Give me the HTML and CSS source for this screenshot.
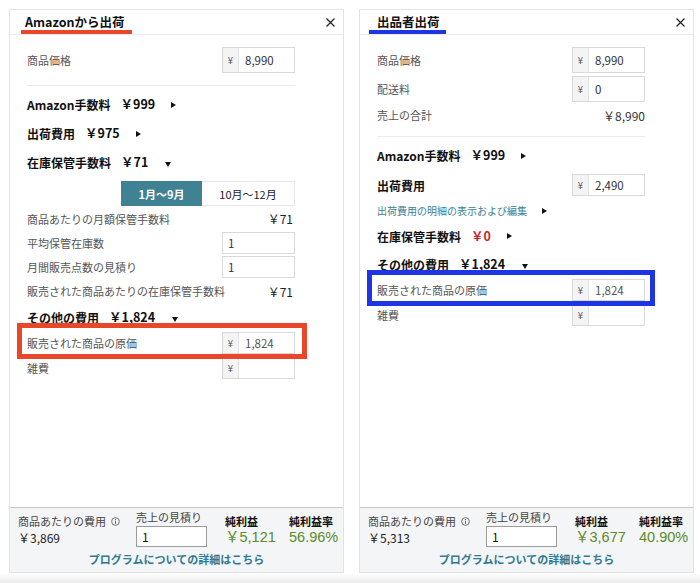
FILE: index.html
```html
<!DOCTYPE html>
<html lang="ja">
<head>
<meta charset="utf-8">
<title>収益シミュレーター</title>
<link rel="stylesheet" href="styles.css">
</head>
<body>
<div class="page">
  <section class="panel">
    <header class="panel-head">
      <h2 class="tab tab-red">Amazonから出荷</h2>
      <svg class="close" viewBox="0 0 9 9"><path d="M0.5 0.5L8.5 8.5M8.5 0.5L0.5 8.5" stroke="#222" stroke-width="1.2"/></svg>
    </header>
    <div class="panel-body">
      <div class="row h26">
        <span class="label">商品価格</span>
        <div class="field lg"><span class="addon">¥</span><span class="val">8,990</span></div>
      </div>
      <div class="divider d-left"></div>
      <div class="fee"><span class="fee-name">Amazon手数料</span><span class="fee-val">￥999</span><i class="tri-r"></i></div>
      <div class="fee"><span class="fee-name">出荷費用</span><span class="fee-val">￥975</span><i class="tri-r"></i></div>
      <div class="fee"><span class="fee-name">在庫保管手数料</span><span class="fee-val">￥71</span><i class="tri-d"></i></div>
      <div class="tabs">
        <span class="seg seg-on">1月〜9月</span>
        <span class="seg seg-off">10月〜12月</span>
      </div>
      <div class="row h25"><span class="label">商品あたりの月額保管手数料</span><span class="amount">￥71</span></div>
      <div class="row h24"><span class="label">平均保管在庫数</span><div class="field"><span class="val">1</span></div></div>
      <div class="row h24"><span class="label">月間販売点数の見積り</span><div class="field"><span class="val">1</span></div></div>
      <div class="row h24"><span class="label">販売された商品あたりの在庫保管手数料</span><span class="amount">￥71</span></div>
      <div class="fee"><span class="fee-name">その他の費用</span><span class="fee-val">￥1,824</span><i class="tri-d"></i></div>
      <div class="row h22 hl hl-red"><span class="label">販売された商品の原価</span><div class="field"><span class="addon">¥</span><span class="val muted">1,824</span></div></div>
      <div class="row h22 mt3"><span class="label">雑費</span><div class="field"><span class="addon">¥</span><span class="val"></span></div></div>
    </div>
    <footer class="panel-foot">
      <div class="foot-grid">
        <div class="fcol">
          <div class="f-label">商品あたりの費用<svg class="info" viewBox="0 0 10 10"><circle cx="5" cy="5" r="4.3" fill="none" stroke="#555" stroke-width="0.9"/><circle cx="5" cy="3" r="0.7" fill="#555"/><path d="M5 4.4V7.6" stroke="#555" stroke-width="1"/></svg></div>
          <div class="f-cost">￥3,869</div>
        </div>
        <div class="fcol fcol-qty">
          <div class="f-label tight">売上の見積り</div>
          <div class="qty">1</div>
        </div>
        <div class="fcol fcol-res">
          <div class="f-head">純利益</div>
          <div class="f-green">￥5,121</div>
        </div>
        <div class="fcol fcol-res">
          <div class="f-head">純利益率</div>
          <div class="f-green">56.96%</div>
        </div>
      </div>
      <div class="f-link">プログラムについての詳細はこちら</div>
    </footer>
  </section>

  <section class="panel">
    <header class="panel-head">
      <h2 class="tab tab-blue">出品者出荷</h2>
      <svg class="close" viewBox="0 0 9 9"><path d="M0.5 0.5L8.5 8.5M8.5 0.5L0.5 8.5" stroke="#222" stroke-width="1.2"/></svg>
    </header>
    <div class="panel-body">
      <div class="row h26">
        <span class="label">商品価格</span>
        <div class="field lg"><span class="addon">¥</span><span class="val">8,990</span></div>
      </div>
      <div class="row h26 mt3">
        <span class="label">配送料</span>
        <div class="field lg"><span class="addon">¥</span><span class="val">0</span></div>
      </div>
      <div class="row h26"><span class="label">売上の合計</span><span class="amount total">￥8,990</span></div>
      <div class="divider d-right"></div>
      <div class="fee"><span class="fee-name">Amazon手数料</span><span class="fee-val">￥999</span><i class="tri-r"></i></div>
      <div class="row h30"><span class="fee-name">出荷費用</span><div class="field"><span class="addon">¥</span><span class="val">2,490</span></div></div>
      <div class="link-row"><span class="small-link">出荷費用の明細の表示および編集</span><i class="tri-r tri-link"></i></div>
      <div class="fee h28 mt1"><span class="fee-name">在庫保管手数料</span><span class="fee-val red">￥0</span><i class="tri-r"></i></div>
      <div class="fee"><span class="fee-name">その他の費用</span><span class="fee-val">￥1,824</span><i class="tri-d"></i></div>
      <div class="row h22 hl hl-blue"><span class="label">販売された商品の原価</span><div class="field"><span class="addon">¥</span><span class="val muted">1,824</span></div></div>
      <div class="row h22 mt3"><span class="label">雑費</span><div class="field"><span class="addon">¥</span><span class="val"></span></div></div>
    </div>
    <footer class="panel-foot">
      <div class="foot-grid">
        <div class="fcol">
          <div class="f-label">商品あたりの費用<svg class="info" viewBox="0 0 10 10"><circle cx="5" cy="5" r="4.3" fill="none" stroke="#555" stroke-width="0.9"/><circle cx="5" cy="3" r="0.7" fill="#555"/><path d="M5 4.4V7.6" stroke="#555" stroke-width="1"/></svg></div>
          <div class="f-cost">￥5,313</div>
        </div>
        <div class="fcol fcol-qty">
          <div class="f-label tight">売上の見積り</div>
          <div class="qty">1</div>
        </div>
        <div class="fcol fcol-res">
          <div class="f-head">純利益</div>
          <div class="f-green">￥3,677</div>
        </div>
        <div class="fcol fcol-res">
          <div class="f-head">純利益率</div>
          <div class="f-green">40.90%</div>
        </div>
      </div>
      <div class="f-link">プログラムについての詳細はこちら</div>
    </footer>
  </section>
</div>
</body>
</html>
```

FILE: styles.css
```css
* {
  box-sizing: border-box;
  margin: 0;
  padding: 0;
}

html, body {
  height: 583px;
  overflow: hidden;
}

body {
  font-family: "Noto Sans CJK JP", "Noto Sans", sans-serif;
  color: #111;
  background: linear-gradient(to bottom, #ffffff 573px, #ececec 583px);
}

.page {
  display: flex;
  gap: 15px;
  padding: 9px 0 0 9px;
}

.panel {
  width: 335px;
  height: 564px;
  border: 1px solid #e3e3e3;
  background: #fff;
  display: flex;
  flex-direction: column;
}

/* header */
.panel-head {
  height: 25px;
  border-bottom: 1px solid #ececec;
  display: flex;
  justify-content: space-between;
  align-items: flex-start;
  flex-shrink: 0;
}

.tab {
  height: 24px;
  font-size: 12.5px;
  font-weight: 700;
  line-height: 16px;
  padding-top: 4px;
  border-bottom: 4px solid;
  color: #111;
}

.tab-red {
  border-bottom-color: #e8472a;
  margin-left: 11px;
  padding-left: 4px;
  padding-right: 7px;
}

.tab-blue {
  border-bottom-color: #1d35e4;
  margin-left: 9px;
  padding-left: 8px;
  padding-right: 6px;
}

.close {
  width: 9px;
  height: 9px;
  margin: 8px 8px 0 0;
}

/* body */
.panel-body {
  flex: 1;
  padding: 12px 0 0 17px;
}

.row {
  width: 268px;
  display: flex;
  align-items: center;
  justify-content: space-between;
}

.h22 { height: 22px; }
.h24 { height: 24px; }
.h25 { height: 25px; }
.h26 { height: 26px; }
.h28 { height: 28px !important; }
.h30 { height: 30px; }
.mt1 { margin-top: 1px; }
.mt3 { margin-top: 3px; }

.label {
  font-size: 11px;
  color: #555;
  line-height: 14px;
}

.amount {
  font-size: 12px;
  color: #222;
  margin-right: 2px;
}

.amount.total {
  margin-right: 0;
  color: #333;
}

.field {
  width: 73px;
  height: 22px;
  display: flex;
  border: 1px solid #d9d9d9;
  background: #fff;
}

.field.lg {
  height: 26px;
}

.addon {
  width: 16px;
  flex-shrink: 0;
  background: #f4f4f4;
  border-right: 1px solid #e2e2e2;
  font-size: 9.5px;
  color: #555;
  display: flex;
  align-items: center;
  justify-content: center;
}

.val {
  flex: 1;
  padding-left: 6px;
  font-size: 11.5px;
  color: #333;
  display: flex;
  align-items: center;
}

.field .val:first-child {
  padding-left: 5px;
}

.val.muted {
  color: #555;
}

.divider {
  width: 268px;
  height: 1px;
  background: #ececec;
  margin-bottom: 4px;
}

.d-left { margin-top: 12px; }
.d-right { margin-top: 8px; }

.fee {
  height: 29px;
  display: flex;
  align-items: center;
}

.fee-name {
  font-size: 12px;
  font-weight: 700;
  color: #111;
}

.fee-val {
  font-size: 12.5px;
  font-weight: 700;
  color: #111;
  margin-left: 10px;
  position: relative;
  top: -1px;
}

.fee-val.red {
  color: #c7262b;
}

.tri-r {
  display: inline-block;
  width: 0;
  height: 0;
  margin-left: 16px;
  border-left: 5px solid #111;
  border-top: 3.5px solid transparent;
  border-bottom: 3.5px solid transparent;
}

.tri-d {
  display: inline-block;
  width: 0;
  height: 0;
  margin-left: 17px;
  margin-top: 3px;
  border-top: 5px solid #111;
  border-left: 3.5px solid transparent;
  border-right: 3.5px solid transparent;
}

.tabs {
  display: flex;
  width: 174px;
  height: 25px;
  margin: 4px 0 0 94px;
  border: 1px solid #e6e6e6;
  font-size: 11px;
}

.seg {
  display: flex;
  align-items: center;
  justify-content: center;
}

.seg-on {
  width: 81px;
  margin: -1px 0 -1px -1px;
  background: #3e8294;
  color: #fff;
  font-weight: 700;
}

.seg-off {
  flex: 1;
  color: #222;
}

.link-row {
  height: 21px;
  display: flex;
  align-items: center;
}

.small-link {
  font-size: 10px;
  color: #3a8197;
}

.tri-link {
  margin-left: 15px;
}

/* highlight annotation boxes */
.hl {
  position: relative;
}

.hl::after {
  content: "";
  position: absolute;
  left: -10px;
  right: -12px;
  top: -9px;
  bottom: -5px;
  border: 5px solid;
  pointer-events: none;
}

.hl-red::after {
  border-color: #e8472a;
}

.hl-blue::after {
  border-color: #1d35e4;
  right: -10px;
}

/* footer */
.panel-foot {
  height: 65px;
  flex-shrink: 0;
  border-top: 1px solid #c6c6c6;
  background: #f3f5f6;
  padding: 5px 8px 0;
}

.foot-grid {
  display: grid;
  grid-template-columns: 118px 89px 64px auto;
  height: 34px;
}

.f-label {
  font-size: 11px;
  color: #444;
  line-height: 16px;
  display: flex;
  align-items: center;
}

.f-label.tight {
  line-height: 14px;
}

.info {
  width: 9px;
  height: 9px;
  margin-left: 5px;
}

.f-cost {
  font-size: 12px;
  color: #222;
  line-height: 18px;
}

.fcol-qty {
  margin-top: -3px;
}

.qty {
  width: 71px;
  height: 21px;
  margin-top: 2px;
  border: 1px solid #9a9a9a;
  background: #fff;
  font-size: 12px;
  color: #111;
  padding-left: 5px;
  line-height: 19px;
}

.fcol-res {
  margin-top: 1px;
}

.f-head {
  font-size: 11px;
  font-weight: 700;
  color: #111;
  line-height: 14px;
}

.f-green {
  margin-top: 1px;
  font-family: "Liberation Sans", "Noto Sans CJK JP", sans-serif;
  font-size: 14.5px;
  color: #5b8b2c;
  line-height: 17px;
}

.f-link {
  margin-top: 4px;
  text-align: center;
  font-size: 11px;
  font-weight: 700;
  color: #2f7a92;
  line-height: 16px;
}
```
